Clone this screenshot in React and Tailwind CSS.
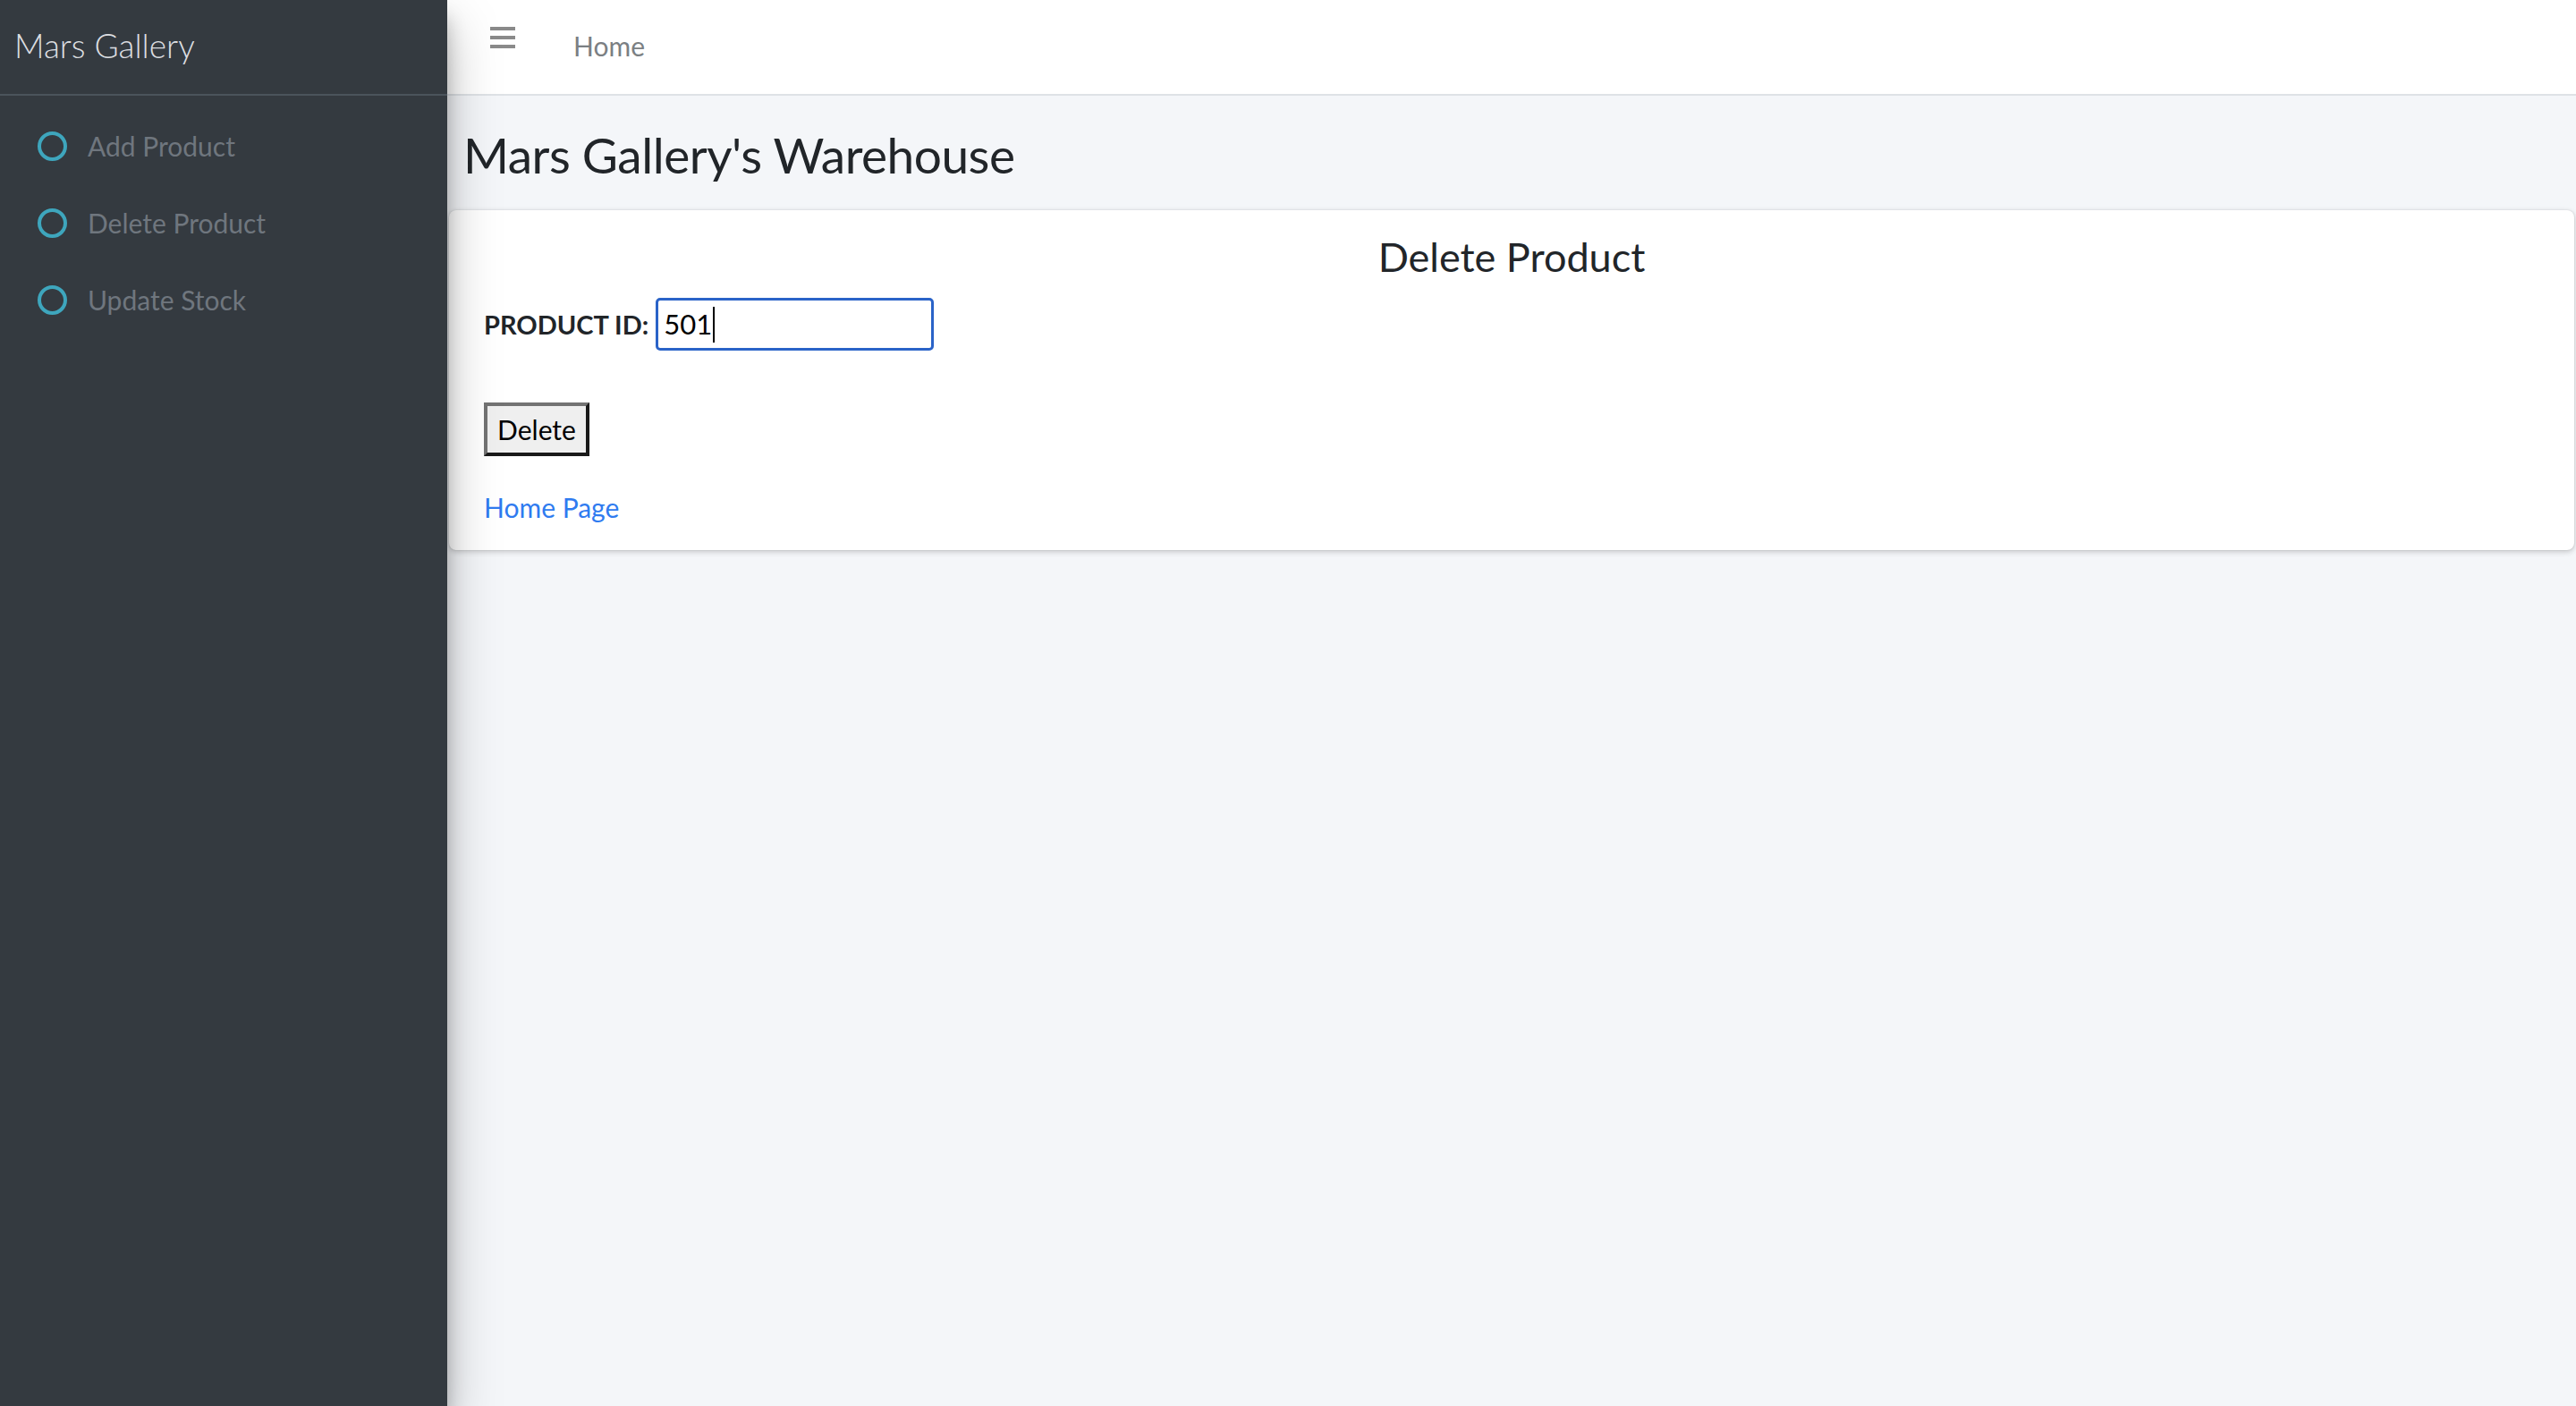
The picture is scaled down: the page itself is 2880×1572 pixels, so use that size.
import React from 'react';

const navItems = ['Add Product', 'Delete Product', 'Update Stock'];

const Sidebar = () => (
  <aside className="relative z-10 w-[500px] shrink-0 bg-[#343a40] shadow-[0_28px_56px_rgba(0,0,0,0.25),0_20px_20px_rgba(0,0,0,0.22)]">
    <div className="h-[107px] border-b-2 border-[#4b545c] pl-[16px] pt-[27px]">
      <span className="text-[37px] leading-[48px] font-light text-[#dcdee0]">Mars Gallery</span>
    </div>
    <nav className="flex flex-col gap-[6px] pt-[16px]">
      {navItems.map((item) => (
        <a key={item} href="#" className="flex h-[80px] items-center pl-[42px]">
          <span className="h-[33px] w-[33px] rounded-full border-[4px] border-[#3ea6bd]" />
          <span className="ml-[23px] text-[30px] text-[#6f767e]">{item}</span>
        </a>
      ))}
    </nav>
  </aside>
);

const Navbar = () => (
  <header className="flex h-[107px] items-start border-b-2 border-[#dee2e6] bg-white">
    <button className="ml-[48px] mt-[30px] flex w-[28px] flex-col gap-[6px]">
      <span className="h-[4px] w-full bg-[#8a8a8a]" />
      <span className="h-[4px] w-full bg-[#8a8a8a]" />
      <span className="h-[4px] w-full bg-[#8a8a8a]" />
    </button>
    <a href="#" className="ml-[65px] mt-[31px] text-[30px] leading-[40px] text-[#7b7f83]">Home</a>
  </header>
);

export default function App() {
  return (
    <div className="flex h-[1572px] w-full overflow-hidden font-['Lato',sans-serif]">
      <Sidebar />
      <main className="flex min-w-0 flex-1 flex-col bg-[#f4f6f9]">
        <Navbar />
        <div className="px-[18px] pt-[36px] pb-[32px]">
          <h1 className="text-[55px] leading-[60px] tracking-[-0.5px] text-[#212529]">Mars Gallery's Warehouse</h1>
        </div>
        <section className="ml-[2px] mr-[2px] rounded-[8px] bg-white px-[39px] pt-[25px] pb-[28px] shadow-[0_0_2px_rgba(0,0,0,0.125),0_2px_6px_rgba(0,0,0,0.2)]">
          <h3 className="text-center text-[45px] leading-[54px] text-[#212529]">Delete Product</h3>
          <form className="mt-[19px]">
            <div className="flex items-center">
              <label className="text-[29px] font-bold text-[#212529]">PRODUCT ID:</label>
              <div className="ml-[8px] flex h-[59px] w-[311px] items-center rounded-[5px] border-[3px] border-[#2a63c8] pl-[6px]">
                <span className="text-[31px] text-black">501</span>
                <span className="ml-[1px] h-[40px] w-[2px] bg-black" />
              </div>
            </div>
            <button
              type="button"
              className="mt-[58px] h-[60px] w-[118px] border-[4px] border-[#1a1a1a] border-t-[#737373] border-l-[#737373] bg-[#efefef] text-[30px] text-black"
            >
              Delete
            </button>
          </form>
          <a href="#" className="mt-[37px] block text-[30px] leading-[40px] text-[#2f7bf0]">Home Page</a>
        </section>
      </main>
    </div>
  );
}
